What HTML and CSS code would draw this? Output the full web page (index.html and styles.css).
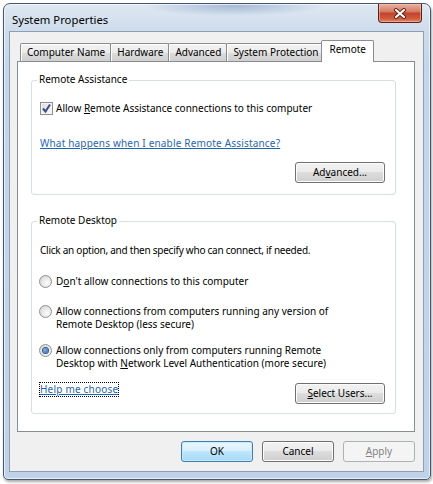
FILE: index.html
```html
<!DOCTYPE html>
<html>
<head>
<meta charset="utf-8">
<link rel="stylesheet" href="styles.css">
</head>
<body>
<div class="window">
  <div class="titlebar">
    <span class="title">System Properties</span>
    <div class="close">
      <svg width="14" height="11" viewBox="0 0 14 11"><path d="M3 2 L11 9 M11 2 L3 9" stroke="#5a2018" stroke-width="4" stroke-linecap="round"/><path d="M3 2 L11 9 M11 2 L3 9" stroke="#fff" stroke-width="2.2" stroke-linecap="round"/></svg>
    </div>
  </div>
  <div class="client">
    <div class="tabs">
      <div class="tab">Computer Name</div>
      <div class="tab">Hardware</div>
      <div class="tab">Advanced</div>
      <div class="tab">System Protection</div>
      <div class="tab tab-active">Remote</div>
    </div>
    <div class="panel">
      <div class="group group-assist">
        <div class="legend">Remote Assistance</div>
        <label class="check-row">
          <span class="checkbox"><svg width="11" height="11" viewBox="0 0 11 11"><path d="M2 5.5 L4.5 8.5 L9 1.5" fill="none" stroke="#3b4f86" stroke-width="2"/></svg></span>
          <span>Allow <u>R</u>emote Assistance connections to this computer</span>
        </label>
        <a class="link link-what">What happens when I enable Remote Assistance?</a>
        <div class="btn btn-right btn-adv">Ad<u>v</u>anced...</div>
      </div>
      <div class="group group-desktop">
        <div class="legend">Remote Desktop</div>
        <div class="intro">Click an option, and then specify who can connect, if needed.</div>
        <div class="radio-row radio-1"><span class="radio"></span><span>D<u>o</u>n't allow connections to this computer</span></div>
        <div class="radio-row radio-2"><span class="radio"></span><span>Allow connections from computers running any version of<br>Remote Desktop (less secure)</span></div>
        <div class="radio-row radio-3"><span class="radio radio-on"></span><span>Allow connections only from computers running Remote<br>Desktop with <u>N</u>etwork Level Authentication (more secure)</span></div>
        <div class="bottom-row">
          <a class="link link-help">Help me choose</a>
          <div class="btn"><u>S</u>elect Users...</div>
        </div>
      </div>
    </div>
    <div class="footer">
      <div class="btn btn-default">OK</div>
      <div class="btn">Cancel</div>
      <div class="btn btn-disabled"><u>A</u>pply</div>
    </div>
  </div>
</div>
</body>
</html>
```
FILE: styles.css
```css
* { box-sizing: border-box; }
html, body { margin: 0; padding: 0; background: #fff; }
body {
  width: 433px;
  height: 484px;
  padding: 3px 0 0 3px;
  font-family: "Noto Sans", "Segoe UI", sans-serif;
  font-size: 10px;
  color: #000;
  overflow: hidden;
}
.window {
  width: 428px;
  height: 477px;
  border: 1px solid #46566b;
  border-radius: 7px 7px 5px 5px;
  background:
    radial-gradient(ellipse 90px 10px at 230px 2px, rgba(120,150,190,0.55), rgba(120,150,190,0)),
    linear-gradient(180deg, #dfe8f2 0px, #cfdceb 26px, #c4d6ea 60px, #bfd2e8 100%);
  box-shadow: inset 0 0 0 1px rgba(255,255,255,0.6), 1px 2px 3px rgba(0,0,0,0.35);
  display: flex;
  flex-direction: column;
}
.titlebar {
  height: 27px;
  display: flex;
  align-items: flex-start;
  justify-content: space-between;
  padding: 0 8px 0 8px;
}
.title {
  font-size: 11.3px;
  line-height: 14px;
  margin-top: 9px;
  color: #000;
}
.close {
  width: 44px;
  height: 19px;
  border: 1px solid #5b2219;
  border-top: none;
  border-radius: 0 0 4px 4px;
  background: linear-gradient(180deg, #e9b0a2 0%, #d6806b 40%, #c0452b 52%, #cf5a3c 80%, #e08a6a 100%);
  box-shadow: inset 0 0 0 1px rgba(255,200,190,0.5);
  display: flex;
  align-items: center;
  justify-content: center;
}
.client {
  margin: 0 6px 0 5px;
  height: 441px;
  border: 1px solid #8c9fb7;
  background: #f0f0f0;
  padding: 8px 8px 0 7px;
  display: flex;
  flex-direction: column;
}
.tabs {
  height: 21px;
  display: flex;
  align-items: flex-end;
  padding-left: 3px;
}
.tab {
  height: 18px;
  line-height: 17px;
  padding: 0 5px 0 6px;
  border: 1px solid #898c95;
  border-bottom: none;
  border-radius: 2px 2px 0 0;
  background: linear-gradient(180deg, #f3f3f3 0%, #ebebeb 50%, #dddddd 51%, #cfcfcf 100%);
  box-shadow: inset 1px 1px 0 #fff;
  margin-right: -1px;
  white-space: nowrap;
}
.tab-active {
  height: 22px;
  line-height: 17px;
  margin: 0 -2px -1px -2px;
  padding: 0 7px;
  background: #fff;
  box-shadow: none;
  position: relative;
  z-index: 1;
}
.panel {
  height: 371px;
  border: 1px solid #898c95;
  background: #fff;
  padding: 18px 0 0 13px;
  display: flex;
  flex-direction: column;
}
.group {
  width: 365px;
  border: 1px solid #d5dfe5;
  border-radius: 3px;
  padding: 0 10px 0 7px;
  display: flex;
  flex-direction: column;
  line-height: 13px;
}
.group-assist { padding-bottom: 11px; }
.group-desktop { margin-top: 26px; padding-bottom: 9px; }
.legend {
  align-self: flex-start;
  margin: -8px 0 0 -2px;
  padding: 0 2px;
  background: #fff;
  height: 13px;
}
.check-row {
  margin-top: 16px;
  display: flex;
  align-items: center;
  height: 13px;
}
.checkbox {
  width: 13px;
  height: 13px;
  margin-left: 1px;
  margin-right: 3px;
  border: 1px solid #8e8f8f;
  background: linear-gradient(135deg, #dcdcdc, #fbfbfb);
  box-shadow: inset 0 0 0 1px #f4f4f4;
  display: flex;
  align-items: center;
  justify-content: center;
}
.link {
  color: #1f66b1;
  text-decoration: underline;
  align-self: flex-start;
}
.link-what { margin-top: 22px; margin-left: 1px; letter-spacing: 0.18px; }
.btn {
  width: 90px;
  height: 21px;
  border: 1px solid #707070;
  border-radius: 3px;
  background: linear-gradient(180deg, #f2f2f2 0%, #ebebeb 49%, #dddddd 50%, #cfcfcf 100%);
  box-shadow: inset 0 0 0 1px #fcfcfc;
  display: flex;
  align-items: center;
  justify-content: center;
  line-height: 13px;
}
.btn-right { align-self: flex-end; }
.btn-adv { margin-top: 12px; }
.intro { margin-top: 17px; letter-spacing: -0.25px; margin-left: 1px; }
.radio-row {
  display: flex;
  align-items: flex-start;
}
.radio-1 { margin-top: 18px; }
.radio-2 { margin-top: 17px; }
.radio-3 { margin-top: 13px; }
.radio {
  flex: none;
  width: 13px;
  height: 13px;
  margin-right: 4px;
  border: 1px solid #8e8f8f;
  border-radius: 50%;
  background: radial-gradient(circle at 65% 65%, #fdfdfd 0%, #e2e2e2 60%, #cfcfcf 100%);
  display: flex;
  align-items: center;
  justify-content: center;
}
.radio-on::after {
  content: "";
  width: 5px;
  height: 5px;
  border-radius: 50%;
  background: radial-gradient(circle at 40% 40%, #8fb8e6, #1d4f8f);
  box-shadow: 0 0 0 1px #2a5a94;
}
.bottom-row {
  margin-top: 13px;
  display: flex;
  align-items: center;
  justify-content: space-between;
}
.link-help {
  outline: 1px dotted #000;
  outline-offset: 0;
  margin-left: 1px;
  letter-spacing: 0.2px;
}
.footer {
  margin-top: 9px;
  display: flex;
  justify-content: flex-end;
  gap: 9px;
}
.footer .btn { width: 72px; }
.btn-default {
  border-color: #3c7fb1;
  background: linear-gradient(180deg, #eaf6fd 0%, #d9f0fc 49%, #bee6fd 50%, #a7d9f5 100%);
  box-shadow: inset 0 0 0 1px #c9eafb;
}
.btn-disabled {
  border-color: #adb2b5;
  background: #f4f4f4;
  box-shadow: none;
  color: #838383;
}
```
